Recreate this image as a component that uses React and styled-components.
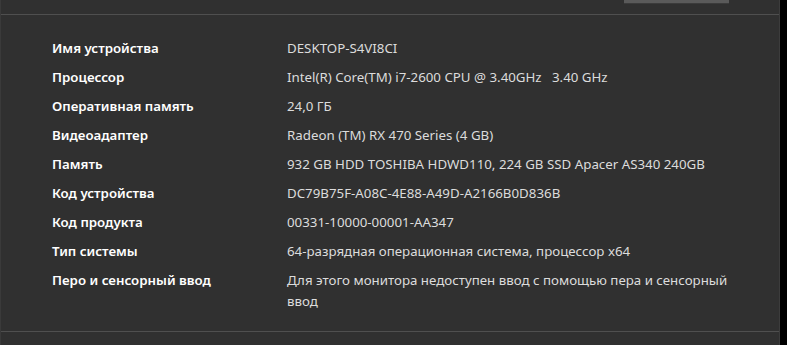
import styled, { createGlobalStyle } from 'styled-components';

const GlobalStyle = createGlobalStyle`
  html, body {
    margin: 0;
    padding: 0;
    background: #000;
  }
  body {
    font-family: "Noto Sans", "Open Sans", sans-serif;
  }
`

const Panel = styled.div`
  width: 780px;
  height: 345px;
  background: #303030;
  border-left: 1px solid #3a3a3a;
  border-right: 1px solid #3c3c3c;
  display: flex;
  flex-direction: column;
  box-sizing: border-box;
  overflow: hidden;
`

const TopStrip = styled.div`
  height: 14px;
  display: flex;
  justify-content: flex-end;
  align-items: flex-start;
  padding-right: 50px;
  border-bottom: 1px solid #4f4f4f;
`

const TopButton = styled.div`
  width: 105px;
  height: 3px;
  background: #5a5a5a;
  border-bottom: 1px solid #3b3b3b;
`

const Specs = styled.div`
  display: grid;
  grid-template-columns: 235px 452px;
  padding: 19px 0 15px 51px;
  border-bottom: 1px solid #4f4f4f;
`

const Label = styled.div`
  padding: 4px 0;
  font-size: 13.3px;
  line-height: 21px;
  font-weight: 600;
  color: #ffffff;
`

const Value = styled.div`
  padding: 4px 0;
  font-size: 13.3px;
  line-height: 21px;
  color: #dcdcdc;
  white-space: pre-wrap;
`

const rows = [
  ['Имя устройства', 'DESKTOP-S4VI8CI'],
  ['Процессор', 'Intel(R) Core(TM) i7-2600 CPU @ 3.40GHz   3.40 GHz'],
  ['Оперативная память', '24,0 ГБ'],
  ['Видеоадаптер', 'Radeon (TM) RX 470 Series (4 GB)'],
  ['Память', '932 GB HDD TOSHIBA HDWD110, 224 GB SSD Apacer AS340 240GB'],
  ['Код устройства', 'DC79B75F-A08C-4E88-A49D-A2166B0D836B'],
  ['Код продукта', '00331-10000-00001-AA347'],
  ['Тип системы', '64-разрядная операционная система, процессор x64'],
  ['Перо и сенсорный ввод', 'Для этого монитора недоступен ввод с помощью пера и сенсорный ввод'],
]

export default function App() {
  return (
    <>
      <GlobalStyle />
      <Panel>
        <TopStrip>
          <TopButton />
        </TopStrip>
        <Specs>
          {rows.map(([label, value]) => (
            <>
              <Label key={label}>{label}</Label>
              <Value key={label + '-v'}>{value}</Value>
            </>
          ))}
        </Specs>
      </Panel>
    </>
  )
}
